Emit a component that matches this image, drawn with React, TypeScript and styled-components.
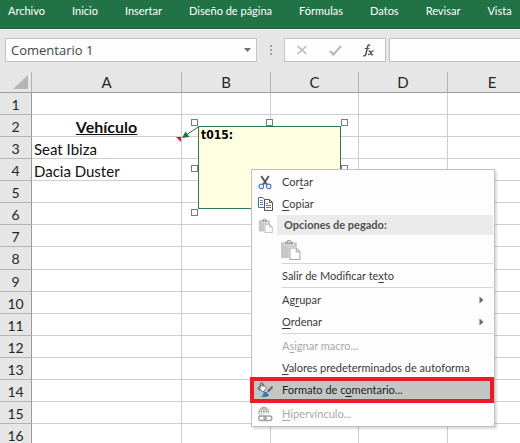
import React from "react";
import styled, { createGlobalStyle, css } from "styled-components";

const GlobalStyle = createGlobalStyle`
  *, *::before, *::after { box-sizing: border-box; }
  body { margin: 0; overflow: hidden; background: #fff; }
  button, input { font: inherit; color: inherit; margin: 0; padding: 0; border: 0; background: none; }
`;

const uiFont = `Lato, "Noto Sans", sans-serif`;
const fieldFont = `"Open Sans", "Noto Sans", sans-serif`;
const cellFont = `Lato, "Open Sans", sans-serif`;

const Window = styled.div`
  position: relative;
  display: flex;
  flex-direction: column;
  height: 100vh;
  overflow: hidden;
  background: #e6e6e6;
  font: 11px/16px ${uiFont};
`;

const Ribbon = styled.nav`
  display: flex;
  flex: none;
  gap: 27px;
  height: 29px;
  padding: 3px 8px 0;
  background: #217346;
  border-bottom: 1px solid #19603a;
`;

const RibbonTab = styled.button`
  height: 16px;
  color: #fff;
  white-space: nowrap;
`;

const FormulaBar = styled.div`
  display: flex;
  flex: none;
  align-items: center;
  height: 43px;
  padding: 0 0 2px 5px;
  border-top: 1px solid #f6f6f6;
`;

const Field = styled.div`
  display: flex;
  align-items: center;
  height: 24px;
  background: #fdfdfd;
  border: 1px solid #c3c3c3;
`;

const NameBox = styled(Field)`
  width: 252px;
  padding: 0 5px 0 5px;
  color: #444;
  font: 13px/16px ${fieldFont};

  input { flex: 1; min-width: 0; outline: 0; }
  button { display: flex; }
`;

const Grip = styled.svg`
  flex: none;
  margin: 0 11px;
`;

const FormulaTools = styled(Field)`
  width: 102px;
  justify-content: space-between;
  padding: 0 10px 0 11px;
  button { display: flex; }
`;

const FormulaField = styled(Field)`
  flex: 1;
  margin-left: 3px;
  border-right: 0;
  input { width: 100%; padding: 0 6px; outline: 0; }
`;

const Sheet = styled.main`
  flex: 1;
  min-height: 0;
  overflow: hidden;
  background: #fff;
`;

const Grid = styled.table`
  width: 100%;
  min-width: 537px;
  table-layout: fixed;
  border-collapse: separate;
  border-spacing: 0;
  color: #111;
  font: 15px/18px ${cellFont};
`;

const Column = styled.col<{ $width?: number }>`
  ${(p) => p.$width !== undefined && css`width: ${p.$width}px;`}
`;

const ColumnHeader = styled.th`
  height: 21px;
  padding: 0;
  background: #e6e6e6;
  border-right: 1px solid #b4b4b4;
  border-bottom: 1px solid #9b9b9b;
  font-weight: 400;
  color: #262626;
`;

const Corner = styled(ColumnHeader)`
  text-align: right;
  svg { display: block; margin: 0 3px 0 auto; }
`;

const Row = styled.tr`
  height: 22px;
  &:nth-child(8n) { height: 23px; }
`;

const RowHeader = styled.th`
  padding: 2px 0 0;
  background: #e6e6e6;
  border-right: 1px solid #9b9b9b;
  border-bottom: 1px solid #b4b4b4;
  font-size: 14px;
  font-weight: 400;
  color: #262626;
`;

const Cell = styled.td<{ $title?: boolean }>`
  position: relative;
  padding: 2px 2px 0;
  border-right: 1px solid #cecece;
  border-bottom: 1px solid #cecece;
  white-space: nowrap;
  ${(p) => p.$title && css`
    text-align: center;
    font-size: 16px;
    font-weight: 700;
    text-decoration: underline;
  `}
`;

const CommentMark = styled.i`
  position: absolute;
  top: 0;
  right: 0;
  border-top: 5px solid #e0142d;
  border-left: 5px solid transparent;
`;

const Note = styled.aside`
  position: absolute;
  top: 126px;
  left: 198px;
  width: 143px;
  height: 83px;
  padding: 0 2px;
  background: #ffffe1;
  border: 1px solid #2f7a50;
  color: #000;
  font: bold 12px/16px "DejaVu Sans Condensed", "DejaVu Sans", sans-serif;
`;

const Handle = styled.span<{ $x: string; $y: string }>`
  position: absolute;
  left: calc(${(p) => p.$x});
  top: calc(${(p) => p.$y});
  width: 7px;
  height: 7px;
  background: #fff;
  border: 1px solid #7b7b7b;
`;

const NoteArrow = styled.svg`
  position: absolute;
  top: -1px;
  left: -18px;
`;

const Menu = styled.div`
  position: absolute;
  top: 169px;
  left: 251px;
  width: 244px;
  padding: 1px 1px 1px 0;
  background: #fdfdfd;
  border: 1px solid #c0c0c0;
  box-shadow: 2px 2px 2px rgba(0, 0, 0, 0.14);
  color: #3a3a3a;
`;

const MenuRow = styled.button<{ $marked?: boolean }>`
  position: relative;
  display: grid;
  grid-template-columns: 30px 1fr 12px;
  align-items: center;
  width: 100%;
  height: 22px;
  padding-right: 2px;
  text-align: left;
  white-space: nowrap;

  &:disabled { color: #a9a9a9; }

  ${(p) => p.$marked && css`
    margin-bottom: 2px;
    background: #c5c5c5;
    color: #1c1c1c;
    &::after {
      content: "";
      position: absolute;
      inset: -2px -1px -2px -2px;
      border: 4px solid #ea1c24;
    }
  `}
`;

const IconSlot = styled.span`
  display: flex;
  justify-content: center;
  padding-right: 4px;
`;

const PasteHeading = styled.div`
  display: grid;
  grid-template-columns: 25px 1fr;
  align-items: center;
  height: 20px;

  ${IconSlot} { padding: 0 0 0 2px; }
`;

const PasteTitle = styled.strong`
  padding-left: 7px;
  background: #ebebeb;
  line-height: 20px;
  font-weight: 700;
  color: #505050;
`;

const PasteButton = styled.button`
  display: flex;
  align-items: center;
  height: 28px;
  margin-left: 28px;
`;

const Separator = styled.hr`
  height: 1px;
  margin: 0 0 1px 30px;
  border: 0;
  background: #d6d6d6;
`;

const Key = styled.u`
  text-underline-offset: 2px;
`;

const ScissorsIcon = () => (
  <svg width="14" height="15" viewBox="0 0 14 15" fill="none" aria-hidden="true">
    <path d="M3.200 1 8.800 9.500M10.800 1 5.200 9.500" stroke="#555" strokeWidth="1.900" />
    <circle cx="3.300" cy="11.400" r="2.200" stroke="#4a80bd" strokeWidth="1.200" />
    <circle cx="10.700" cy="11.400" r="2.200" stroke="#4a80bd" strokeWidth="1.200" />
  </svg>
);

const CopyIcon = () => (
  <svg width="15" height="14" viewBox="0 0 15 14" fill="none" aria-hidden="true">
    <path d="M6.500 10.500h-6V.5h4.200l2.800 2.600" stroke="#666" />
    <path d="M2 3.500h2.500M2 5.500h3M2 7.500h3" stroke="#4f80b8" />
    <path d="M6.500 2.500h5l3 3v8h-8z" fill="#fff" stroke="#555" />
    <path d="M11.500 2.500v3h3" stroke="#555" />
    <path d="M8 6.500h2M8 8.500h5M8 10.500h5" stroke="#4f80b8" />
  </svg>
);

const PasteIcon = ({ size }: { size: number }) => (
  <svg width={size} height={size} viewBox="0 0 20 20" fill="none" aria-hidden="true">
    <path d="M1 3h3v3h9V3h3v4.500H8.500V18H1z" fill="#c9c6c6" />
    <path d="M5 4.800V3h1.800a1.800 1.800 0 0 1 3.600 0H12v1.800z" fill="#a2a0a0" stroke="#a2a0a0" />
    <circle cx="8.600" cy="2.700" r=".8" fill="#fff" />
    <path d="M9.500 8.500h6l3.500 3.600v7.400H9.500z" fill="#fff" stroke="#a8a8a8" />
    <path d="M15.500 8.500v3.600H19" stroke="#a8a8a8" />
  </svg>
);

const FormatIcon = () => (
  <svg width="16" height="16" viewBox="0 0 16 16" fill="none" aria-hidden="true">
    <path d="M1.800 5.500 5.800 2.200l3.700 4-3.700 4.100z" fill="#fff" stroke="#666" />
    <path d="M3.200 6V2.300a1.400 1.400 0 0 1 2.800 0V5" stroke="#555" />
    <path d="M.8 5.400 2.600 8.500" stroke="#3f78b8" strokeWidth="1.400" />
    <path d="m15.400 4.600-4.800 5.400" stroke="#666" strokeWidth="2" />
    <path d="M3.500 14.800c2 0 2.300-1.400 2.700-3 .6-2.200 3-3 4.800-1.200 1.600 1.600 1.200 3.200-.4 3.900-1.600.7-4.900.7-7.100.3z" fill="#3f78b8" />
    <path d="m8.800 8.800 3.400 3.400" stroke="#fff" />
  </svg>
);

const LinkIcon = () => (
  <svg width="16" height="16" viewBox="0 0 16 16" fill="none" stroke="#a0a0a0" aria-hidden="true">
    <path d="M3 9.500A5 5 0 1 1 11.700 7.500" />
    <path d="M6.900 1v7.500M2 5.500h9.800M3 3.200h7.600M4.500 8.500C3.700 5.500 4.700 2.600 6.900 1 9 2.600 10 5 9.500 7.500" strokeWidth=".8" />
    <rect x="1.700" y="10" width="7.400" height="4.500" rx="2.200" strokeWidth="1.400" />
    <rect x="7" y="10" width="7.800" height="4.500" rx="2.200" strokeWidth="1.400" />
  </svg>
);

const SubmenuArrow = () => (
  <svg width="5" height="8" viewBox="0 0 5 8" aria-hidden="true">
    <path d="M.5.500 4.500 4 .5 7.500z" fill="#6a6a6a" />
  </svg>
);

const tabs = ["Archivo", "Inicio", "Insertar", "Diseño de página", "Fórmulas", "Datos", "Revisar", "Vista"];
const columns = [
  { name: "A", width: 150 },
  { name: "B", width: 89 },
  { name: "C", width: 88 },
  { name: "D", width: 89 },
  { name: "E", width: 89 },
];
const columnA: Record<number, string> = { 2: "Vehículo", 3: "Seat Ibiza", 4: "Dacia Duster" };
const rows = Array.from({ length: 16 }, (_, i) => i + 1);

/* Positions along the note's frame, measured from its padding box. */
const handles = [
  ["-8px", "-8px"],
  ["50% - 4px", "-8px"],
  ["100% + 1px", "-8px"],
  ["-8px", "50% - 3px"],
  ["100% + 1px", "50% - 3px"],
  ["-8px", "100% + 1px"],
  ["50% - 4px", "100% + 1px"],
  ["100% + 1px", "100% + 1px"],
];

interface MenuItemProps {
  text: string;
  mnemonic: number;
  icon?: React.ReactNode;
  submenu?: boolean;
  disabled?: boolean;
  marked?: boolean;
}

const MenuItem = ({ text, mnemonic, icon, submenu, disabled, marked }: MenuItemProps) => (
  <MenuRow type="button" role="menuitem" disabled={disabled} $marked={marked}>
    <IconSlot>{icon}</IconSlot>
    <span>
      {text.slice(0, mnemonic)}
      <Key>{text[mnemonic]}</Key>
      {text.slice(mnemonic + 1)}
    </span>
    {submenu && <SubmenuArrow />}
  </MenuRow>
);

export default function App() {
  return (
    <>
      <GlobalStyle />
      <Window>
        <Ribbon>
          {tabs.map((tab) => (
            <RibbonTab key={tab} type="button">{tab}</RibbonTab>
          ))}
        </Ribbon>

        <FormulaBar>
          <NameBox>
            <input aria-label="Cuadro de nombres" defaultValue="Comentario 1" />
            <button type="button" aria-label="Mostrar nombres">
              <svg width="7" height="4" viewBox="0 0 7 4"><path d="M0 0h7L3.500 4z" fill="#6e6e6e" /></svg>
            </button>
          </NameBox>
          <Grip width="5" height="12" viewBox="0 0 5 12" fill="#a0a0a0">
            <path d="M2 1h2v2H2zM2 5h2v2H2zM2 9h2v2H2z" />
          </Grip>
          <FormulaTools>
            <button type="button" aria-label="Cancelar">
              <svg width="12" height="10" viewBox="0 0 12 10" fill="none">
                <path d="m1.500 1 9 8M10.500 1l-9 8" stroke="#b9b9b9" strokeWidth="1.600" />
              </svg>
            </button>
            <button type="button" aria-label="Introducir">
              <svg width="13" height="11" viewBox="0 0 13 11" fill="none">
                <path d="m1 6 3.500 3.500L12 1" stroke="#b9b9b9" strokeWidth="2.200" />
              </svg>
            </button>
            <button type="button" aria-label="Insertar función">
              <svg width="13" height="13" viewBox="0 0 13 13" fill="none" stroke="#505050">
                <path d="M8.200 1.300C6.800.5 5.900 1.300 5.500 3L4 9.800C3.700 11.500 2.700 12.300 1.300 11.600" strokeWidth="1.500" />
                <path d="M2.800 4.500h4.500" />
                <path d="M6.500 7.300c1.500-.8 2 .2 2.400 1.700.4 1.600 1 2.200 2.300 1.500M11.700 7c-1.500-.4-2.200 1-3 2-.8 1.300-1.400 1.900-2.500 1.400" strokeWidth="1.300" />
              </svg>
            </button>
          </FormulaTools>
          <FormulaField>
            <input aria-label="Barra de fórmulas" />
          </FormulaField>
        </FormulaBar>

        <Sheet>
          <Grid>
            <colgroup>
              <Column $width={32} />
              {columns.map((c) => <Column key={c.name} $width={c.width} />)}
              <Column />
            </colgroup>
            <thead>
              <tr>
                <Corner aria-label="Seleccionar todo">
                  <svg width="15" height="14" viewBox="0 0 15 14"><path d="M15 0v14H0z" fill="#b5b5b5" /></svg>
                </Corner>
                {columns.map((c) => <ColumnHeader key={c.name} scope="col">{c.name}</ColumnHeader>)}
                <ColumnHeader />
              </tr>
            </thead>
            <tbody>
              {rows.map((r) => (
                <Row key={r}>
                  <RowHeader scope="row">{r}</RowHeader>
                  <Cell $title={r === 2}>
                    {columnA[r]}
                    {r === 3 && <CommentMark />}
                  </Cell>
                  <Cell /><Cell /><Cell /><Cell /><Cell />
                </Row>
              ))}
            </tbody>
          </Grid>
        </Sheet>

        <Note>
          t015:
          <NoteArrow width="18" height="13" viewBox="0 0 18 13" aria-hidden="true">
            <path d="M18 .500 6 8.500" stroke="#217346" fill="none" />
            <path d="m1 12 3.500-6.500L8.500 11z" fill="#217346" />
          </NoteArrow>
          {handles.map(([x, y]) => <Handle key={x + y} $x={x} $y={y} />)}
        </Note>

        <Menu role="menu">
          <MenuItem text="Cortar" mnemonic={3} icon={<ScissorsIcon />} />
          <MenuItem text="Copiar" mnemonic={0} icon={<CopyIcon />} />
          <PasteHeading>
            <IconSlot><PasteIcon size={15} /></IconSlot>
            <PasteTitle>Opciones de pegado:</PasteTitle>
          </PasteHeading>
          <PasteButton type="button" role="menuitem" aria-label="Pegar">
            <PasteIcon size={21} />
          </PasteButton>
          <Separator />
          <MenuItem text="Salir de Modificar texto" mnemonic={21} />
          <Separator />
          <MenuItem text="Agrupar" mnemonic={2} submenu />
          <MenuItem text="Ordenar" mnemonic={0} submenu />
          <Separator />
          <MenuItem text="Asignar macro..." mnemonic={1} disabled />
          <MenuItem text="Valores predeterminados de autoforma" mnemonic={0} />
          <MenuItem text="Formato de comentario..." mnemonic={12} icon={<FormatIcon />} marked />
          <MenuItem text="Hipervínculo..." mnemonic={0} icon={<LinkIcon />} disabled />
        </Menu>
      </Window>
    </>
  );
}
